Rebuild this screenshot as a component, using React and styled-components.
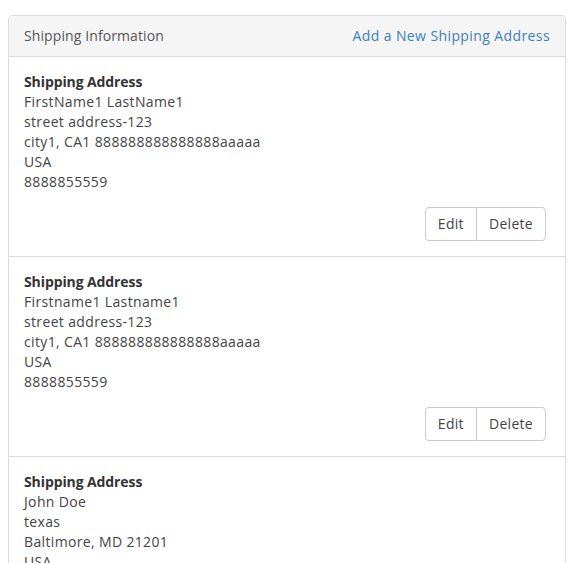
import React from "react";
import styled, { createGlobalStyle } from "styled-components";

const Global = createGlobalStyle`
  html, body { margin: 0; padding: 0; overflow: hidden; background: #fff; }
  body { font-family: "Open Sans", "Liberation Sans", sans-serif; color: #333; }
`;

const Page = styled.div`
  padding: 15px 0 0 8px;
`;

const Panel = styled.div`
  width: 558px;
  box-sizing: border-box;
  border: 1px solid #ddd;
  border-radius: 4px;
  background: #fff;
`;

const Heading = styled.div`
  display: flex;
  justify-content: space-between;
  align-items: center;
  padding: 10px 15px;
  height: 20px;
  background: #f5f5f5;
  border-bottom: 1px solid #ddd;
  border-radius: 3px 3px 0 0;
  font-size: 14px;
  line-height: 20px;
`;

const Title = styled.span`
  color: #555;
  letter-spacing: 0.1px;
`;

const Link = styled.a`
  color: #3a7fc1;
  text-decoration: none;
  letter-spacing: 0.4px;
`;

const Item = styled.div`
  padding: 15px 19px 15px 15px;
  border-bottom: 1px solid #ddd;
  font-size: 14px;
  line-height: 20px;
  color: #444;
`;

const Label = styled.div`
  font-weight: 700;
  color: #333;
  letter-spacing: -0.1px;
`;

const Line = styled.div`
  letter-spacing: 0.35px;
`;

const Actions = styled.div`
  display: flex;
  justify-content: flex-end;
  margin-top: 15px;
`;

const Button = styled.button`
  font-family: inherit;
  font-size: 14px;
  line-height: 20px;
  letter-spacing: 0.3px;
  color: #444;
  background: #fff;
  border: 1px solid #ccc;
  padding: 6px 12px;
  height: 34px;
  cursor: pointer;
  border-radius: ${(p) => (p.$first ? "4px 0 0 4px" : "0 4px 4px 0")};
  margin-left: ${(p) => (p.$first ? "0" : "-1px")};
`;

const addresses = [
  ["FirstName1 LastName1", "street address-123", "city1, CA1 888888888888888aaaaa", "USA", "8888855559"],
  ["Firstname1 Lastname1", "street address-123", "city1, CA1 888888888888888aaaaa", "USA", "8888855559"],
  ["John Doe", "texas", "Baltimore, MD 21201", "USA", "8888855559"],
];

export default function App() {
  return (
    <Page>
      <Global />
      <Panel>
        <Heading>
          <Title>Shipping Information</Title>
          <Link href="#">Add a New Shipping Address</Link>
        </Heading>
        {addresses.map((lines, i) => (
          <Item key={i}>
            <Label>Shipping Address</Label>
            {lines.map((l, j) => (
              <Line key={j}>{l}</Line>
            ))}
            <Actions>
              <Button $first>Edit</Button>
              <Button>Delete</Button>
            </Actions>
          </Item>
        ))}
      </Panel>
    </Page>
  );
}
